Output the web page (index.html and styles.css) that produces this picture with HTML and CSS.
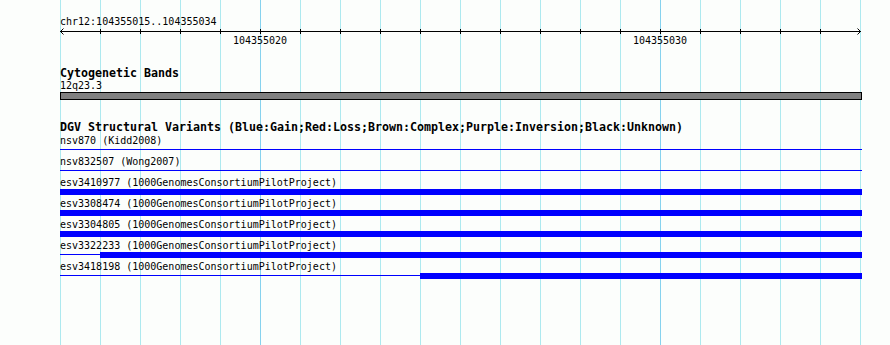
FILE: index.html
```html
<!DOCTYPE html>
<html lang="en">
<head>
<meta charset="utf-8">
<title>chr12:104355015..104355034</title>
<link rel="stylesheet" href="styles.css">
</head>
<body>
<div class="panel">
  <div class="ruler-block">
    <div class="seg-label">chr12:104355015..104355034</div>
    <svg class="ruler" width="802" height="7" viewBox="0 0 802 7" aria-hidden="true">
      <path d="M0 3.5H801" stroke="#000" stroke-width="1" fill="none"/>
      <path d="M40.5 1V6M80.5 1V6M120.5 1V6M160.5 1V6M200.5 1V6M240.5 1V6M280.5 1V6M320.5 1V6M360.5 1V6M400.5 1V6M440.5 1V6M480.5 1V6M520.5 1V6M560.5 1V6M600.5 1V6M640.5 1V6M680.5 1V6M720.5 1V6M760.5 1V6" stroke="#000" stroke-width="1" fill="none"/>
      <path d="M3.5 0.5L0.5 3.5L3.5 6.5M797.5 0.5L800.5 3.5L797.5 6.5" stroke="#000" stroke-width="1" fill="none"/>
    </svg>
    <div class="tick-labels"><span>104355020</span><span>104355030</span></div>
  </div>

  <section class="track cyto">
    <h2 class="track-title">Cytogenetic Bands</h2>
    <div class="feat-label">12q23.3</div>
    <div class="band"></div>
  </section>

  <section class="track dgv">
    <h2 class="track-title">DGV Structural Variants (Blue:Gain;Red:Loss;Brown:Complex;Purple:Inversion;Black:Unknown)</h2>
    <div class="sv">
      <div class="feat-label">nsv870 (Kidd2008)</div>
      <div class="glyph"><span class="thin grow"></span></div>
    </div>
    <div class="sv">
      <div class="feat-label">nsv832507 (Wong2007)</div>
      <div class="glyph"><span class="thin grow"></span></div>
    </div>
    <div class="sv">
      <div class="feat-label">esv3410977 (1000GenomesConsortiumPilotProject)</div>
      <div class="glyph"><span class="thick grow"></span></div>
    </div>
    <div class="sv">
      <div class="feat-label">esv3308474 (1000GenomesConsortiumPilotProject)</div>
      <div class="glyph"><span class="thick grow"></span></div>
    </div>
    <div class="sv">
      <div class="feat-label">esv3304805 (1000GenomesConsortiumPilotProject)</div>
      <div class="glyph"><span class="thick grow"></span></div>
    </div>
    <div class="sv">
      <div class="feat-label">esv3322233 (1000GenomesConsortiumPilotProject)</div>
      <div class="glyph"><span class="thin" style="width:40px"></span><span class="thick grow"></span></div>
    </div>
    <div class="sv">
      <div class="feat-label">esv3418198 (1000GenomesConsortiumPilotProject)</div>
      <div class="glyph"><span class="thin" style="width:360px"></span><span class="thick grow"></span></div>
    </div>
  </section>
</div>
</body>
</html>
```

FILE: styles.css
```css
html, body {
  margin: 0;
  padding: 0;
  background: #fcfefc;
}

.panel {
  width: 890px;
  height: 345px;
  box-sizing: border-box;
  padding: 15px 28px 0 60px;
  font-family: "DejaVu Sans Mono", "Liberation Mono", monospace;
  font-size: 10px;
  line-height: 13px;
  color: #000;
  background-color: #fcfefc;
  background-image:
    repeating-linear-gradient(to right, #86d2ee 0 1px, transparent 1px 400px),
    repeating-linear-gradient(to right, #ade9ef 0 1px, transparent 1px 40px);
  background-position: 260px 0, 60px 0;
  background-size: 401px 100%, 801px 100%;
  background-repeat: no-repeat;
  overflow: hidden;
}

.ruler-block {
  display: flex;
  flex-direction: column;
}

.seg-label {
  height: 13px;
  white-space: nowrap;
}

.ruler {
  display: block;
  width: 802px;
  height: 7px;
  margin-top: 0;
}

.tick-labels {
  display: grid;
  grid-template-columns: 400px 400px;
  height: 13px;
  margin-top: -1px;
}

.tick-labels span {
  text-align: center;
  white-space: nowrap;
}

.track {
  display: flex;
  flex-direction: column;
}

.track-title {
  margin: 0;
  font-size: 11.63px;
  font-weight: bold;
  line-height: 12px;
  height: 12px;
  white-space: nowrap;
}

.cyto {
  margin-top: 20px;
}

.feat-label {
  height: 13px;
  white-space: nowrap;
}

.band {
  width: 802px;
  height: 8px;
  box-sizing: border-box;
  border: 1px solid #000;
  background: #808080;
}

.dgv {
  margin-top: 21px;
}

.dgv .track-title {
  margin-bottom: 1px;
}

.sv {
  display: flex;
  flex-direction: column;
  height: 21px;
}

.glyph {
  display: flex;
  width: 802px;
  height: 6px;
}

.thin {
  height: 1px;
  margin-top: 2px;
  background: #0000ff;
  flex: none;
}

.thick {
  height: 6px;
  background: #0000ff;
  flex: none;
}

.grow {
  flex: 1 1 auto;
}
```
